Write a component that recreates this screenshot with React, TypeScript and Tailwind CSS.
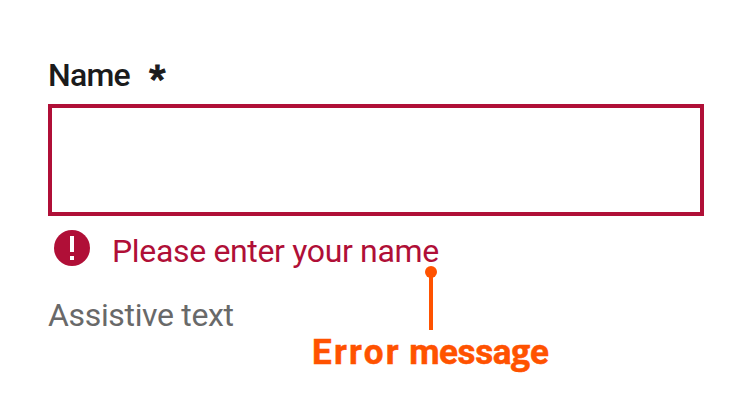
export default function App() {
  return (
    <main className="h-[400px] w-[752px] overflow-hidden bg-white px-12 pt-[55px] font-['Roboto','Liberation_Sans',sans-serif] text-[32px] leading-10 text-[#1b1b1b]">
      <label htmlFor="name" className="flex h-[49px] font-medium">
        <span className="w-[101px] tracking-[-0.75px]">Name</span>
        <span className="pt-1 text-[35px] font-black [-webkit-text-stroke:1px_#1b1b1b]">*</span>
      </label>
      <input
        id="name"
        className="block h-28 w-[656px] border-4 border-[#b00f37] bg-white outline-none"
      />
      <div className="relative mt-[15px] flex h-16 text-[#b00f37]">
        <svg className="mt-[-1px] ml-[6px] h-9 w-9" viewBox="0 0 36 36">
          <circle cx="18" cy="18" r="18" fill="currentColor" />
          <path d="M16 6h4v16h-4zM16 26h4v4h-4z" fill="white" />
        </svg>
        <p className="ml-[22px] whitespace-nowrap tracking-[-0.34px]">Please enter your name</p>
        <svg className="absolute top-[35px] left-[377px] h-16 w-3" viewBox="0 0 12 64">
          <circle cx="6" cy="6" r="6" fill="#ff5200" />
          <path d="M4 6h4v58H4z" fill="#ff5200" />
        </svg>
      </div>
      <p className="h-[37px] tracking-[-0.34px] text-[#696969]">Assistive text</p>
      <p className="ml-[264px] whitespace-nowrap text-[35px] leading-[42px] font-bold text-[#ff5200] [-webkit-text-stroke:0.5px_#ff5200]">
        <span className="tracking-[2.3px]">Error</span>
        <span className="tracking-[-0.4px]">
          {" "}messa<span className="font-['Open_Sans',sans-serif] text-[34px] leading-none">g</span>e
        </span>
      </p>
    </main>
  );
}
